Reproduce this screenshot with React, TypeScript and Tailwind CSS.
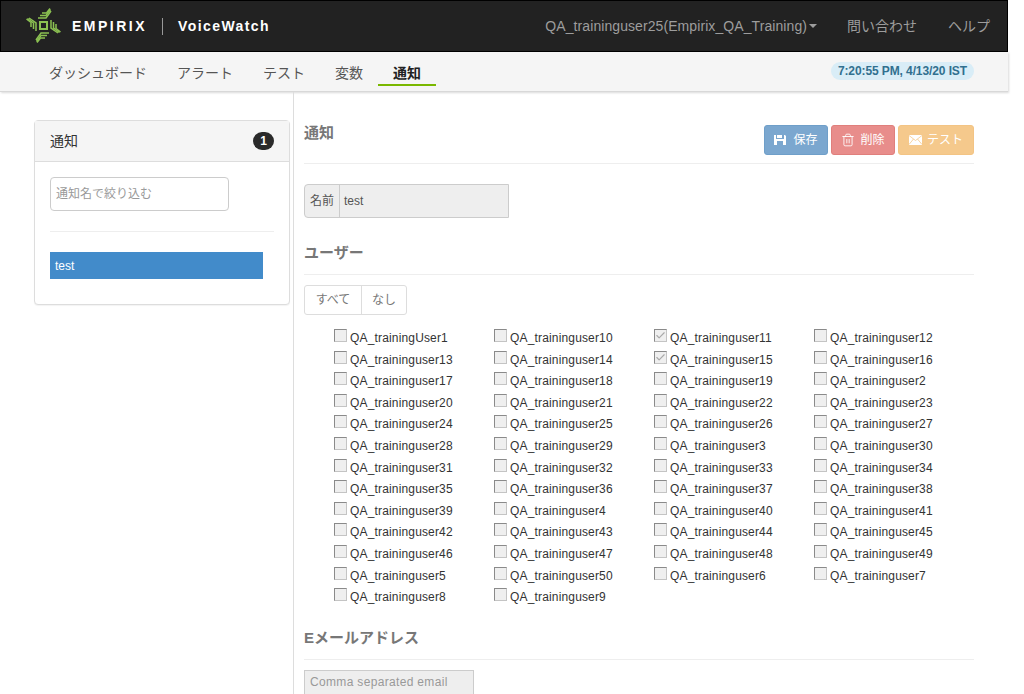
import { Check, Trash2 } from "lucide-react";

const tabs = ["ダッシュボード", "アラート", "テスト", "変数", "通知"];

// 表示順のままのユーザー一覧
const users = [
  "QA_trainingUser1", "QA_traininguser10", "QA_traininguser11", "QA_traininguser12",
  "QA_traininguser13", "QA_traininguser14", "QA_traininguser15", "QA_traininguser16",
  "QA_traininguser17", "QA_traininguser18", "QA_traininguser19", "QA_traininguser2",
  "QA_traininguser20", "QA_traininguser21", "QA_traininguser22", "QA_traininguser23",
  "QA_traininguser24", "QA_traininguser25", "QA_traininguser26", "QA_traininguser27",
  "QA_traininguser28", "QA_traininguser29", "QA_traininguser3", "QA_traininguser30",
  "QA_traininguser31", "QA_traininguser32", "QA_traininguser33", "QA_traininguser34",
  "QA_traininguser35", "QA_traininguser36", "QA_traininguser37", "QA_traininguser38",
  "QA_traininguser39", "QA_traininguser4", "QA_traininguser40", "QA_traininguser41",
  "QA_traininguser42", "QA_traininguser43", "QA_traininguser44", "QA_traininguser45",
  "QA_traininguser46", "QA_traininguser47", "QA_traininguser48", "QA_traininguser49",
  "QA_traininguser5", "QA_traininguser50", "QA_traininguser6", "QA_traininguser7",
  "QA_traininguser8", "QA_traininguser9",
];

const checkedUsers = ["QA_traininguser11", "QA_traininguser15"];

function Logo() {
  const arm = (
    <g fill="none" stroke="#8cc152" strokeWidth="1.5">
      <path d="M12 10 H20 L25 3" />
      <path d="M14 7.5 H20 L24.5 1.5" />
      <path d="M16 5 H20.5 L24 0.5" />
    </g>
  );
  return (
    <svg width="36" height="36" viewBox="0 0 36 36" className="shrink-0">
      <rect x="14" y="14" width="7" height="7" fill="none" stroke="#8cc152" strokeWidth="2" />
      {[0, 90, 180, 270].map((r) => (
        <g key={r} transform={`rotate(${r} 17.5 17.5)`}>
          {arm}
        </g>
      ))}
    </svg>
  );
}

function FloppyIcon() {
  return (
    <svg width="12" height="12" viewBox="0 0 12 12" className="shrink-0">
      <path fill="white" fillRule="evenodd" d="M0 1h2v4h8V1h1l1 1v9H0V1zM3 1h5v3H3V1zM3 7v4h6V7H3z" />
    </svg>
  );
}

function EnvelopeIcon() {
  return (
    <svg width="13" height="10" viewBox="0 0 13 10" className="shrink-0">
      <rect width="13" height="10" fill="white" />
      <path d="M0 0.5 L6.5 5.5 L13 0.5 M0 9.5 L4.5 4 M13 9.5 L8.5 4" fill="none" stroke="#f5c98c" strokeWidth="0.8" />
    </svg>
  );
}

function UserCheck({ name }: { name: string }) {
  const checked = checkedUsers.includes(name);
  return (
    <div className="flex items-start text-xs tracking-[0.16px] text-[#333]">
      <span className="mt-[1px] mr-[3px] flex h-[13px] w-[13px] shrink-0 items-center justify-center border border-[#c4c4c4] border-t-[#8a8a8a] border-l-[#8a8a8a] bg-[#efefef]">
        {checked && <Check size={11} strokeWidth={2.5} className="text-[#a9a9a9]" />}
      </span>
      <span className="pt-[2px] leading-[16px]">{name}</span>
    </div>
  );
}

export default function App() {
  return (
    <div className="h-[694px] w-[1024px] overflow-hidden bg-white font-['Liberation_Sans','Noto_Sans_CJK_JP',sans-serif] text-sm text-[#333]">
      <div className="w-[1008px]">
        {/* ヘッダー */}
        <header className="flex h-[52px] items-center justify-between border border-black bg-[#222] pr-[17px] pl-[25px]">
          <div className="flex items-center">
            <Logo />
            <span className="ml-[10px] text-sm font-bold tracking-[2.5px] text-white">EMPIRIX</span>
            <span className="mx-[15px] h-[17px] w-px bg-[#999]" />
            <span className="text-sm font-bold tracking-[1.4px] text-white">VoiceWatch</span>
          </div>
          <div className="flex items-center text-sm text-[#9d9d9d]">
            <span className="tracking-[0.08px]">QA_traininguser25(Empirix_QA_Training)</span>
            <span className="ml-[2px] h-0 w-0 border-x-4 border-t-4 border-x-transparent border-t-[#9d9d9d]" />
            <span className="ml-[30px]">問い合わせ</span>
            <span className="ml-[31px]">ヘルプ</span>
          </div>
        </header>

        {/* タブ */}
        <nav className="flex h-[40px] items-center justify-between border-b border-[#d8d8d8] bg-[#f5f5f5] pr-[34px] pl-[34px] shadow-[1px_1px_2px_rgba(0,0,0,0.15)]">
          <div className="flex h-full">
            {tabs.map((tab) => {
              const active = tab === "通知";
              return (
                <div
                  key={tab}
                  className={`flex h-[34px] items-center border-b-2 px-[15px] pt-[9px] ${
                    active ? "border-[#7ab800] font-bold text-[#222]" : "border-transparent text-[#555]"
                  }`}
                >
                  {tab}
                </div>
              );
            })}
          </div>
          <span className="mb-[2px] rounded-[10px] bg-[#d9edf7] px-[7px] py-px text-xs leading-[16px] font-bold tracking-[-0.1px] text-[#31708f]">
            7:20:55 PM, 4/13/20 IST
          </span>
        </nav>

        <div className="flex pl-[34px]">
          {/* 左パネル */}
          <aside className="mt-[28px] mr-[3px] h-[185px] w-[256px] shrink-0 rounded border border-[#ddd] bg-white shadow-[0_1px_1px_rgba(0,0,0,0.05)]">
            <div className="flex h-[41px] items-center justify-between border-b border-[#ddd] bg-[#f5f5f5] px-[15px]">
              <span className="text-sm">通知</span>
              <span className="flex h-[18px] w-[21px] items-center justify-center rounded-full bg-[#2a2a2a] text-xs font-bold text-white">
                1
              </span>
            </div>
            <div className="px-[15px] pt-[15px]">
              <div className="flex h-[34px] w-[179px] items-center rounded border border-[#ccc] px-[5px] text-xs text-[#999]">
                通知名で絞り込む
              </div>
              <div className="mt-[20px] h-px bg-[#eee]" />
              <div className="mt-[20px] flex h-[27px] w-[213px] items-center bg-[#428bca] px-[5px] text-xs text-white">
                test
              </div>
            </div>
          </aside>

          {/* 右コンテンツ */}
          <main className="h-[602px] w-[681px] shrink-0 border-l border-[#ddd] pt-[18px] pl-[10px]">
            <div className="flex h-[54px] w-[670px] items-start justify-between border-b border-[#eee]">
              <h2 className="pt-[13px] text-[15px] leading-[20px] font-bold text-[#777]">通知</h2>
              <div className="mt-[15px] flex gap-[3px] text-xs text-white">
                <div className="flex h-[30px] w-[64px] items-center justify-center gap-[7px] rounded-[3px] border border-[#6f9fc9] bg-[#7ba7cf]">
                  <FloppyIcon />
                  保存
                </div>
                <div className="flex h-[30px] w-[64px] items-center justify-center gap-[5px] rounded-[3px] border border-[#e07f7c] bg-[#e88d8b]">
                  <Trash2 size={14} strokeWidth={1.5} />
                  削除
                </div>
                <div className="flex h-[30px] w-[76px] items-center justify-center gap-[5px] rounded-[3px] border border-[#f3c484] bg-[#f5c98c]">
                  <EnvelopeIcon />
                  テスト
                </div>
              </div>
            </div>

            <div className="mt-[20px] flex h-[34px] w-[205px] overflow-hidden rounded-l border border-[#ccc] bg-[#eee] text-xs text-[#555]">
              <span className="flex w-[35px] items-center justify-center border-r border-[#ccc]">名前</span>
              <span className="flex items-center px-[4px]">test</span>
            </div>

            <h3 className="mt-[25px] h-[32px] w-[670px] border-b border-[#eee] text-[15px] leading-[20px] font-bold text-[#777]">
              ユーザー
            </h3>

            <div className="mt-[10px] flex h-[30px] w-[103px] rounded-[3px] border border-[#ddd] text-xs text-[#777]">
              <span className="flex w-[57px] items-center justify-center border-r border-[#ddd]">すべて</span>
              <span className="flex flex-1 items-center justify-center">なし</span>
            </div>

            <div className="mt-[13px] ml-[30px] grid auto-rows-[21.6px] grid-cols-[repeat(4,160px)]">
              {users.map((name) => (
                <UserCheck key={name} name={name} />
              ))}
            </div>

            <h3 className="mt-[19px] h-[32px] w-[670px] border-b border-[#eee] text-[15px] leading-[20px] font-bold text-[#777]">
              Eメールアドレス
            </h3>

            <div className="mt-[10px] flex h-[34px] w-[170px] items-start border border-[#ccc] bg-[#eee] px-[5px] pt-[3px] text-xs tracking-[0.33px] text-[#999]">
              Comma separated email
            </div>
          </main>
        </div>
      </div>
    </div>
  );
}
